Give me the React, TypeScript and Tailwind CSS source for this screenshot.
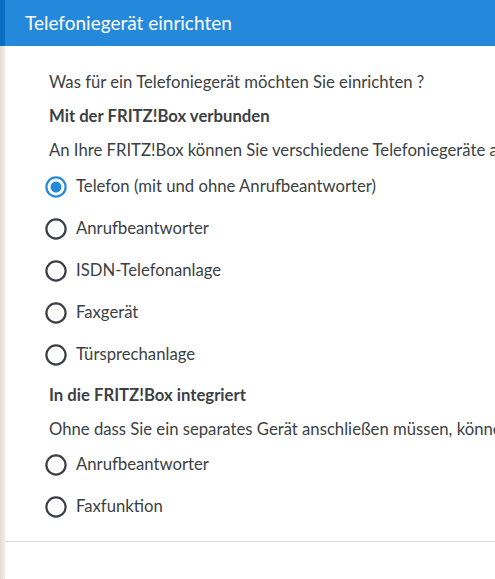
import React from "react";

const font = { fontFamily: "Lato, 'Open Sans', sans-serif" };

function Radio({ label, checked }: { label: string; checked?: boolean }) {
  return (
    <div className="flex h-[42px] items-center gap-[9px] -ml-[4px]">
      <svg width="22" height="22" viewBox="0 0 22 22" className="shrink-0">
        <circle cx="11" cy="11" r="9.6" fill="none" stroke={checked ? "#2589db" : "#3a3e44"} strokeWidth="2.2" />
        {checked && <circle cx="11" cy="11" r="5.5" fill="#2589db" />}
      </svg>
      <span className="text-[16.7px] text-[#3c3f44]">{label}</span>
    </div>
  );
}

export default function App() {
  return (
    <div className="flex h-[579px] w-[495px] overflow-hidden bg-white" style={font}>
      <div className="flex w-[5px] shrink-0 flex-col">
        <div className="h-[46px] bg-[#0a6fc2]" />
        <div className="flex-1 bg-gradient-to-r from-[#e2ddd3] to-[#f1eee9]" />
      </div>
      <div className="flex min-w-0 flex-1 flex-col">
        <div className="flex h-[46px] items-center bg-[#2589db] pl-[20px] text-[19px] text-white">
          Telefoniegerät einrichten
        </div>
        <div className="flex flex-col whitespace-nowrap pl-[44px] pt-[20px] text-[16.7px] text-[#3c3f44]">
          <div className="flex h-[34px] items-center">Was für ein Telefoniegerät möchten Sie einrichten ?</div>
          <div className="flex h-[34px] items-center font-bold">Mit der FRITZ!Box verbunden</div>
          <div className="flex h-[34px] items-center">
            An Ihre FRITZ!Box können Sie verschiedene Telefoniegeräte anschließen.
          </div>
          <div className="-mt-[2px] flex flex-col">
            <Radio label="Telefon (mit und ohne Anrufbeantworter)" checked />
            <Radio label="Anrufbeantworter" />
            <Radio label="ISDN-Telefonanlage" />
            <Radio label="Faxgerät" />
            <Radio label="Türsprechanlage" />
          </div>
          <div className="mt-[3px] flex h-[34px] items-center font-bold">In die FRITZ!Box integriert</div>
          <div className="flex h-[34px] items-center">
            Ohne dass Sie ein separates Gerät anschließen müssen, können Sie diese Funktionen nutzen.
          </div>
          <div className="-mt-[3px] flex flex-col">
            <Radio label="Anrufbeantworter" />
            <Radio label="Faxfunktion" />
          </div>
        </div>
        <div className="mt-[13px] h-px bg-[#d9d9d9]" />
      </div>
    </div>
  );
}
